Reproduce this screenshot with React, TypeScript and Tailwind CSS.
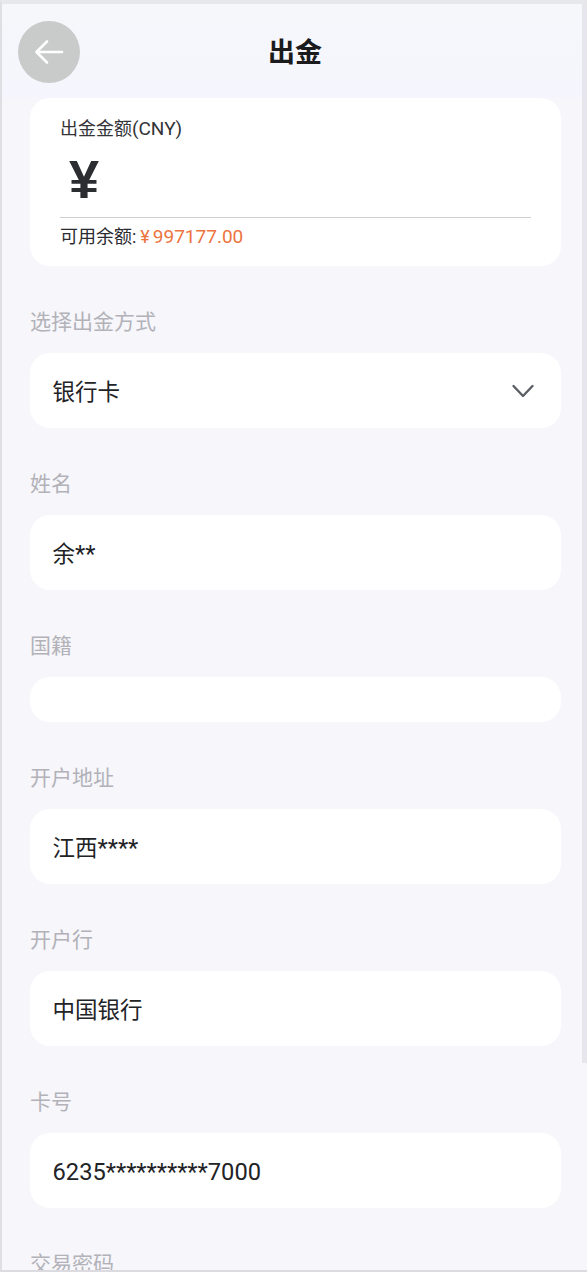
import type { ReactNode } from "react";

const fontStack = { fontFamily: 'Roboto, "Noto Sans CJK SC", sans-serif' };

function BackIcon() {
    return (
        <svg width="32" height="28" viewBox="0 0 32 28" fill="none" stroke="#ffffff" strokeWidth="2.6" strokeLinecap="round" strokeLinejoin="round">
            <path d="M29 14H4" />
            <path d="M14 3.5 3.5 14 14 24.5" />
        </svg>
    );
}

function Chevron() {
    return (
        <svg width="24" height="16" viewBox="0 0 24 16" fill="none" stroke="#5c5f66" strokeWidth="2.4" strokeLinecap="round" strokeLinejoin="round">
            <path d="M2.5 3 12 13 21.5 3" />
        </svg>
    );
}

function Latin({ children }: { children: ReactNode }) {
    return <span className="text-[23.7px]">{children}</span>;
}

function Field({ label, value, tall = true, chevron = false }: { label: string; value?: ReactNode; tall?: boolean; chevron?: boolean }) {
    return (
        <div className="mt-[41px]">
            <div className="h-[30px] text-[21px] leading-[30px] text-[#b2b2b8]">{label}</div>
            <div
                className={`mt-[16px] flex items-center justify-between rounded-[20px] bg-white pl-[22.5px] pr-[26px] text-[22.5px] text-[#222326] ${
                    tall ? "h-[75px]" : "h-[45px]"
                }`}
            >
                <span className="pt-[4px]">{value}</span>
                {chevron && <Chevron />}
            </div>
        </div>
    );
}

export default function App() {
    return (
        <div
            className="relative h-[1272px] w-[587px] overflow-hidden border-t-[4px] border-l-[2px] border-b-[2px] border-t-[#e7e8ec] border-l-[#dfdfe3] border-b-[#dcdce0] bg-[#f6f6fb]"
            style={fontStack}
        >
            {/* scrollbar */}
            <div className="absolute top-0 right-0 h-[1059px] w-[5px] bg-[#e6e6ec]" />

            <header className="flex h-[94px] items-start bg-gradient-to-b from-[#f6f7fb] to-[#f5f6fd] pt-[17px] pr-[15px] pl-[16px]">
                <button className="flex h-[62px] w-[62px] shrink-0 items-center justify-center rounded-full bg-[#c9caca]">
                    <BackIcon />
                </button>
                <h1 className="flex-1 pt-[15px] text-center text-[27px] leading-[34px] font-bold text-[#1b1b1d]">出金</h1>
                <div className="w-[62px] shrink-0" />
            </header>

            <main className="ml-[28px] w-[531px]">
                <section className="flex h-[168px] flex-col rounded-[20px] bg-white px-[30px] pt-[18px]">
                    <div className="h-[26px] text-[18px] leading-[26px] text-[#333438]">
                        出金金额<span className="text-[19px]">(CNY)</span>
                    </div>
                    <div className="mt-[11px] h-[52px] pl-[9px] text-[54px] leading-[52px] font-bold text-[#2c2d31]" style={{ fontFamily: '"Liberation Sans", "Noto Sans CJK SC", sans-serif' }}>¥</div>
                    <div className="mt-[12px] border-t border-[#cfcfd1]" />
                    <div className="mt-[6px] flex items-center text-[18px] leading-[26px] text-[#2b2c30]">
                        可用余额:
                        <span className="ml-[4px] text-[#ec7440]">¥</span>
                        <span className="ml-[3px] text-[19px] text-[#ec7440]">997177.00</span>
                    </div>
                </section>

                <Field label="选择出金方式" value="银行卡" chevron />
                <Field label="姓名" value={<>余<Latin>**</Latin></>} />
                <Field label="国籍" tall={false} />
                <Field label="开户地址" value={<>江西<Latin>****</Latin></>} />
                <Field label="开户行" value="中国银行" />
                <Field label="卡号" value={<Latin>6235**********7000</Latin>} />
                <Field label="交易密码" />
            </main>
        </div>
    );
}
